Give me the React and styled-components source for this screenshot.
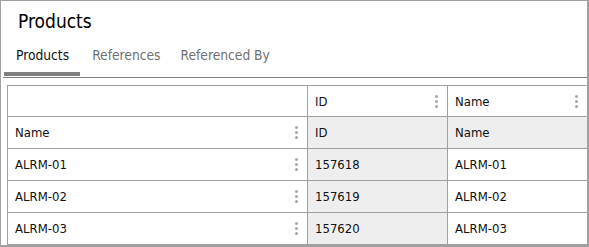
import React from 'react';
import styled, { createGlobalStyle } from 'styled-components';

const Global = createGlobalStyle`
  body {
    margin: 0;
    background: #ffffff;
    font-family: 'DejaVu Sans Condensed', 'DejaVu Sans', sans-serif;
  }
`;

const Frame = styled.div`
  width: 589px;
  height: 247px;
  box-sizing: border-box;
  border: 1px solid #a0a0a0;
  border-right-width: 2px;
  border-bottom-width: 2px;
  padding: 0 0 0 2px;
  display: flex;
  flex-direction: column;
  overflow: hidden;
`;

const Title = styled.h1`
  margin: 0;
  padding: 8px 0 0 15px;
  height: 38px;
  box-sizing: border-box;
  font-size: 19px;
  font-weight: normal;
  line-height: 24px;
  color: #000000;
`;

const TabBar = styled.div`
  display: flex;
  border-bottom: 1px solid #808080;
`;

const Tab = styled.div`
  padding: 9px 8px 8px 12px;
  font-size: 13.7px;
  line-height: 17px;
  color: ${p => (p.active ? '#111111' : '#6f6f6f')};
  border-bottom: 4px solid ${p => (p.active ? '#808080' : 'transparent')};
  margin-bottom: 1px;
  margin-left: ${p => (p.active ? '1px' : '0')};
  padding-right: ${p => (p.active ? '11px' : '8px')};
`;

const Table = styled.div`
  margin: 7px 0 0 4px;
  display: grid;
  grid-template-columns: 300px 140px 140px;
  grid-template-rows: 31px repeat(4, 32px);
  border-top: 1px solid #a0a0a0;
  border-left: 1px solid #a0a0a0;
`;

const Cell = styled.div`
  display: flex;
  align-items: center;
  justify-content: space-between;
  padding: 0 8px 0 7px;
  box-sizing: border-box;
  border-right: 1px solid #a0a0a0;
  border-bottom: 1px solid #a0a0a0;
  background: ${p => (p.shaded ? '#eeeeee' : '#ffffff')};
  font-size: 13px;
  color: #111111;
  white-space: nowrap;
`;

const Kebab = styled.span`
  display: flex;
  flex-direction: column;
  gap: 2px;
  margin-right: 1px;

  i {
    display: block;
    width: 3px;
    height: 3px;
    border-radius: 50%;
    background: #a6a6a6;
  }
`;

const Dots = () => (
  <Kebab>
    <i />
    <i />
    <i />
  </Kebab>
);

const rows = [
  { name: 'ALRM-01', id: '157618' },
  { name: 'ALRM-02', id: '157619' },
  { name: 'ALRM-03', id: '157620' },
];

export default function App() {
  return (
    <>
      <Global />
      <Frame>
        <Title>Products</Title>
        <TabBar>
          <Tab active>Products</Tab>
          <Tab>References</Tab>
          <Tab>Referenced By</Tab>
        </TabBar>
        <Table>
          <Cell />
          <Cell>ID<Dots /></Cell>
          <Cell>Name<Dots /></Cell>

          <Cell>Name<Dots /></Cell>
          <Cell shaded>ID</Cell>
          <Cell shaded>Name</Cell>

          {rows.map(r => (
            <React.Fragment key={r.id}>
              <Cell>{r.name}<Dots /></Cell>
              <Cell shaded>{r.id}</Cell>
              <Cell>{r.name}</Cell>
            </React.Fragment>
          ))}
        </Table>
      </Frame>
    </>
  );
}
